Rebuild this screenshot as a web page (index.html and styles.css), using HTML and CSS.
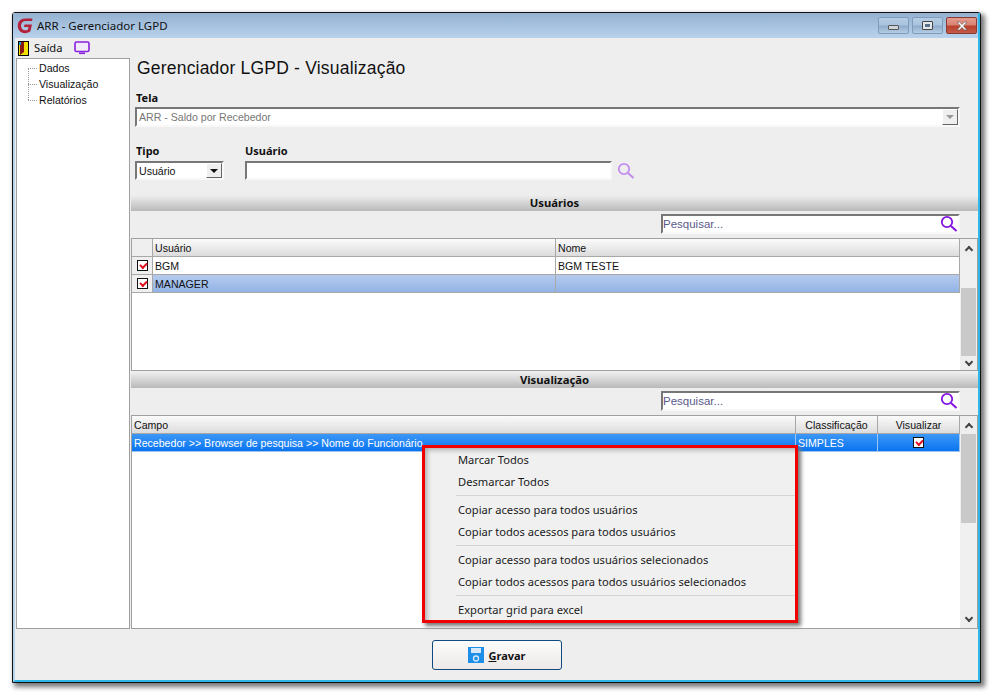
FILE: index.html
```html
<!DOCTYPE html>
<html lang="pt">
<head>
<meta charset="utf-8">
<title>ARR - Gerenciador LGPD</title>
<link rel="stylesheet" href="styles.css">
</head>
<body>
<div class="window">
  <div class="titlebar">
    <svg class="logo" width="17" height="17" viewBox="0 0 17 17"><path d="M15.500 1.500H8C4 1.500.8 4.500.8 8.800c0 4.200 3 7.400 7 7.400 2.500 0 4.500-.8 5.700-2.200L15 7.500H7.500L7 10h4.500l-.5 2.400c-.8.6-1.800.9-3 .9-2.300 0-4-1.900-4-4.500 0-2.800 2-4.800 4.700-4.800H15z" fill="#b3213c"/></svg>
    <span class="wintitle">ARR - Gerenciador LGPD</span>
    <div class="wincontrols">
      <div class="wbtn"><span class="glyph-min"></span></div>
      <div class="wbtn"><span class="glyph-max"></span></div>
      <div class="wbtn close"><svg width="12" height="10" viewBox="0 0 12 10"><path d="M1 1h2.500L6 3.500 8.500 1H11L7.500 5 11 9H8.500L6 6.500 3.500 9H1L4.500 5z" fill="#fff" stroke="#555" stroke-width=".6"/></svg></div>
    </div>
  </div>
  <div class="toolbar">
    <svg class="door" width="11" height="15" viewBox="0 0 11 15"><rect width="11" height="15" fill="#000"/><rect x="1" y="1" width="9" height="13" fill="#f4e000"/><path d="M2 1h4v10l-4 3z" fill="#8a1a10"/><rect x="1" y="1" width="2" height="3" fill="#1c9ad6"/></svg>
    <span class="tool-label">Saída</span>
    <svg class="monitor" width="16" height="14" viewBox="0 0 16 14"><rect x="1" y="1" width="14" height="9.500" rx="1.500" fill="#f2ecfa" stroke="#8a1fe0" stroke-width="1.600"/><rect x="5" y="11.500" width="6" height="1.600" fill="#8a1fe0"/></svg>
  </div>
  <div class="content">
    <ul class="tree">
      <li>Dados</li>
      <li>Visualização</li>
      <li>Relatórios</li>
    </ul>
    <main class="main">
      <h1 class="page-title">Gerenciador LGPD - Visualização</h1>
      <div class="field-tela">
        <label class="flabel">Tela</label>
        <div class="combo disabled">
          <span class="combo-text">ARR - Saldo por Recebedor</span>
          <span class="combo-btn"><i class="arrow"></i></span>
        </div>
      </div>
      <div class="filters">
        <div class="field-tipo">
          <label class="flabel tall">Tipo</label>
          <div class="combo">
            <span class="combo-text">Usuário</span>
            <span class="combo-btn"><i class="arrow"></i></span>
          </div>
        </div>
        <div class="field-user">
          <label class="flabel tall flush">Usuário</label>
          <div class="user-line">
            <div class="input"></div>
            <svg class="lens" width="18" height="18" viewBox="0 0 18 18"><circle cx="7" cy="7" r="5.200" fill="none" stroke="#c38df0" stroke-width="1.800"/><path d="M11 11l5.500 5" stroke="#c38df0" stroke-width="2"/></svg>
          </div>
        </div>
      </div>

      <div class="section-head">Usuários</div>
      <div class="search-row">
        <div class="search">
          <span class="placeholder">Pesquisar...</span>
          <svg width="18" height="18" viewBox="0 0 18 18"><circle cx="7" cy="7" r="5.200" fill="none" stroke="#8412e0" stroke-width="1.800"/><path d="M11 11l5.500 5" stroke="#8412e0" stroke-width="2"/></svg>
        </div>
      </div>
      <div class="table table-users">
        <div class="grid-area">
          <div class="row head cols-users">
            <div class="cell corner"></div><div class="cell">Usuário</div><div class="cell">Nome</div>
          </div>
          <div class="row cols-users">
            <div class="cell corner-body"><span class="check"></span></div><div class="cell">BGM</div><div class="cell">BGM TESTE</div>
          </div>
          <div class="row cols-users soft">
            <div class="cell corner-body"><span class="check"></span></div><div class="cell">MANAGER</div><div class="cell"></div>
          </div>
        </div>
        <div class="scrollbar">
          <span class="sb-btn"><i class="chev up"></i></span>
          <span class="sb-track"><span class="sb-gap-users"></span><span class="sb-thumb"></span></span>
          <span class="sb-btn"><i class="chev down"></i></span>
        </div>
      </div>

      <div class="section-head second">Visualização</div>
      <div class="search-row second">
        <div class="search">
          <span class="placeholder">Pesquisar...</span>
          <svg width="18" height="18" viewBox="0 0 18 18"><circle cx="7" cy="7" r="5.200" fill="none" stroke="#8412e0" stroke-width="1.800"/><path d="M11 11l5.500 5" stroke="#8412e0" stroke-width="2"/></svg>
        </div>
      </div>
      <div class="table table-view">
        <div class="grid-area">
          <div class="row head cols-view">
            <div class="cell">Campo</div><div class="cell center">Classificação</div><div class="cell center">Visualizar</div>
          </div>
          <div class="row cols-view strong">
            <div class="cell">Recebedor &gt;&gt; Browser de pesquisa &gt;&gt; Nome do Funcionário</div><div class="cell">SIMPLES</div><div class="cell center"><span class="check"></span></div>
          </div>
        </div>
        <div class="scrollbar">
          <span class="sb-btn"><i class="chev up"></i></span>
          <span class="sb-track"><span class="sb-thumb view"></span></span>
          <span class="sb-btn"><i class="chev down"></i></span>
        </div>
      </div>
    </main>
  </div>
  <div class="footer">
    <button class="save" type="button">
      <svg width="16" height="16" viewBox="0 0 16 16"><rect width="16" height="16" fill="#1e8fe8"/><rect x="3" y="1" width="10" height="5" fill="#d5e9fa"/><circle cx="8" cy="11.500" r="2.500" fill="none" stroke="#d5e9fa" stroke-width="1.300"/></svg>
      <span><u>G</u>ravar</span>
    </button>
  </div>
  <div class="context-menu">
    <div class="mi">Marcar Todos</div>
    <div class="mi">Desmarcar Todos</div>
    <hr class="sep">
    <div class="mi">Copiar acesso para todos usuários</div>
    <div class="mi">Copiar todos acessos para todos usuários</div>
    <hr class="sep">
    <div class="mi">Copiar acesso para todos usuários selecionados</div>
    <div class="mi">Copiar todos acessos para todos usuários selecionados</div>
    <hr class="sep">
    <div class="mi">Exportar grid para excel</div>
  </div>
</div>
</body>
</html>
```
FILE: styles.css
```css
* { box-sizing: border-box; }
html, body { margin: 0; padding: 0; }
body {
  width: 996px; height: 697px; background: #fff; overflow: hidden;
  font-family: "Liberation Sans", Arial, sans-serif;
  font-size: 10.600px; color: #111;
}
.window {
  position: relative;
  margin: 12px 0 0 12px;
  width: 969px; height: 671px;
  background: #eeeeee;
  border: 1px solid #111;
  border-radius: 3px 3px 0 0;
  box-shadow: 3px 3px 5px 1px #777;
  display: flex; flex-direction: column;
}
.titlebar {
  height: 25px; flex: none; display: flex; align-items: center;
  padding: 0 0 0 4px;
  background: linear-gradient(#93b1d0, #b9d2ec);
  border-right: 2px solid #2fb6e8;
}
.logo { margin-right: 3px; }
.wintitle { font-size: 11.500px; font-family: "Noto Sans", sans-serif; color: #111; }
.wincontrols { margin-left: auto; display: flex; gap: 3px; align-self: flex-start; margin-top: 4px; margin-right: 1px; }
.wbtn {
  width: 31px; height: 17px; display: flex; align-items: center; justify-content: center;
  border: 1px solid #7f9cbc; border-radius: 2px;
  background: linear-gradient(#b4cce4 0, #a9c3de 48%, #8daac9 52%, #b4cce4 100%);
}
.wbtn.close { border-color: #8a3a34; background: linear-gradient(#e39b8e 0, #d98272 48%, #b8402c 52%, #c45a48 100%); }
.glyph-min { width: 11px; height: 5px; margin-top: 4px; background: #cdd4da; border: 1px solid #555; border-radius: 1px; }
.glyph-max { width: 11px; height: 9px; background: #e4e8ec; border: 1px solid #444; border-radius: 1px; display: flex; align-items: center; justify-content: center; }
.glyph-max::after { content: ""; width: 5px; height: 3px; background: #5a6f88; }
.toolbar {
  height: 20px; flex: none; display: flex; align-items: center;
  padding: 0 0 0 3px; border-left: 2px solid #b9d2ec; border-right: 2px solid #2fb6e8;
}
.door { margin-right: 5px; }
.tool-label { font-size: 11.200px; font-family: "Noto Sans", sans-serif; margin: 0 12px 2px 0; }
.content {
  height: 571px; flex: none; display: flex;
  border-left: 2px solid #b9d2ec; border-right: 2px solid #2fb6e8;
  padding-left: 1px; gap: 1px;
}
.tree {
  list-style: none; margin: 0; padding: 1px 0 0 22px;
  width: 114px; flex: none; height: 571px;
  background: #fff; border: 1px solid #a0a0a0;
}
.tree li { height: 16px; line-height: 16px; position: relative; }
.tree li::before {
  content: ""; position: absolute; left: -11px; top: 8px; width: 9px;
  border-top: 1px dotted #999;
}
.tree li:first-child::after {
  content: ""; position: absolute; left: -11px; top: 8px; height: 32px;
  border-left: 1px dotted #999;
}
.main { flex: 1; min-width: 0; display: flex; flex-direction: column; position: relative; }
.page-title {
  margin: 0 0 0 6px; height: 32px;
  font: 400 17.500px/20px "Liberation Sans", sans-serif; color: #111;
  letter-spacing: .2px;
}
.flabel { display: block; font-weight: 700; font-size: 11px; height: 17px; line-height: 15px; padding-left: 1px; color: #111; font-family: "Noto Sans", sans-serif; }
.flabel.tall { height: 18px; }
.flabel.flush { padding-left: 0; }
.field-tela { margin-left: 4px; width: 825px; }
.combo {
  height: 20px; display: flex; align-items: stretch; background: #fff;
  border: 2px solid; border-color: #777 #f8f8f8 #f8f8f8 #777;
}
.combo-text { flex: 1; padding-left: 2px; line-height: 16px; }
.combo-btn {
  width: 16px; background: #efefef; display: flex; align-items: center; justify-content: center;
  border: 1px solid; border-color: #fff #666 #666 #fff;
}
.arrow { width: 0; height: 0; border: 4px solid transparent; border-top: 4px solid #111; border-bottom: 0; }
.combo.disabled .combo-text { color: #777; }
.combo.disabled .arrow { border-top-color: #999; }
.filters { display: flex; margin: 16px 0 0 4px; height: 52px; flex: none; }
.field-tipo { width: 89px; }
.field-tipo .combo { width: 89px; height: 19px; }
.field-tipo .combo-text { color: #111; line-height: 16px; }
.field-user { margin-left: 21px; }
.user-line { display: flex; align-items: center; gap: 5px; }
.input {
  width: 367px; height: 19px; background: #fff;
  border: 2px solid; border-color: #777 #f8f8f8 #f8f8f8 #777;
}
.lens { margin-top: 1px; }
.section-head {
  height: 16px; flex: none; text-align: center; font-weight: 700; font-size: 11.300px; line-height: 15px;
  background: linear-gradient(#efefef, #b9b9b9); color: #111; font-family: "Noto Sans", sans-serif;
}
.section-head.second { margin-top: 1px; }
.search-row { height: 27px; flex: none; display: flex; justify-content: flex-end; padding: 3px 18px 0 0; }
.search {
  width: 299px; height: 20px; background: #fff; display: flex; align-items: center; justify-content: space-between;
  border: 2px solid; border-color: #777 #f8f8f8 #f8f8f8 #777;
}
.placeholder { color: #5a5a8a; font-size: 11.500px; }
.table { flex: none; display: flex; background: #fff; border: 1px solid #a0a0a0; }
.table-users { height: 133px; }
.table-view { height: 214px; }
.grid-area { flex: 1; min-width: 0; }
.row { display: grid; height: 18px; }
.cols-users { grid-template-columns: 21px 403px 1fr; }
.cols-view { grid-template-columns: 664px 82px 1fr; }
.cell {
  padding-left: 2px; line-height: 18px; overflow: hidden; white-space: nowrap;
  border-right: 1px solid #a8a8a8; border-bottom: 1px solid #a8a8a8;
}
.head .cell { background: linear-gradient(#fbfbfb, #dcdcdc); }
.corner, .corner-body { background: #efefef; padding: 0; display: flex; align-items: center; justify-content: center; }
.head .corner { background: #efefef; }
.center { text-align: center; padding-left: 0; }
.soft .cell { background: linear-gradient(#b5cbee, #92b3e6); }
.soft .corner-body { background: #efefef; }
.strong .cell { background: linear-gradient(#3c98f6, #0a74f0); color: #fff; border-color: #9fc5ee; }
.check {
  display: inline-block; width: 11px; height: 11px; vertical-align: -1px; background: #fff; border: 1px solid #111; position: relative;
}
.check::after {
  content: ""; position: absolute; left: 2px; top: 0; width: 5px; height: 3px; transform: rotate(-45deg) translate(-1px, 1px);
  border-left: 2px solid #e01020; border-bottom: 2px solid #e01020;
}
.scrollbar { width: 17px; flex: none; background: #fff; display: flex; flex-direction: column; }
.sb-btn { height: 18px; flex: none; background: #eee; display: flex; align-items: center; justify-content: center; }
.sb-track { flex: 1; display: flex; flex-direction: column; background: #f0f0f0; padding: 0 1px; }
.sb-gap-users { height: 31px; flex: none; }
.sb-thumb { flex: 1; background: #c9c9c9; }
.sb-thumb.view { flex: none; height: 89px; }
.table-users .sb-btn:last-child { height: 14px; }
.chev { width: 6px; height: 6px; border: solid #444; border-width: 2px 0 0 2px; }
.chev.up { transform: rotate(45deg); margin-top: 3px; }
.chev.down { transform: rotate(225deg); margin-bottom: 3px; }
.footer { flex: 1; display: flex; justify-content: center; padding: 11px 0 0 1px; border-left: 2px solid #b9d2ec; border-right: 2px solid #2fb6e8; border-bottom: 2px solid #2fb6e8; }
.save {
  width: 130px; height: 30px; display: flex; align-items: center; justify-content: center; gap: 4px;
  background: linear-gradient(#fdfcfc, #ece9e7); border: 1px solid #0f4a80; border-radius: 3px;
  font: 700 11px "Noto Sans", sans-serif; color: #111; padding: 0;
}
.context-menu {
  position: absolute; left: 409px; top: 432px; width: 376px; height: 178px;
  background: #f0f0f0; border: 3px solid #f00000; box-shadow: 3px 3px 4px #777, inset 4px 4px 5px -2px #aaa;
  padding: 1px 0 0 33px; font: 11.150px "Noto Sans", sans-serif;
}
.mi { height: 22px; line-height: 22px; color: #1a1a1a; white-space: nowrap; }
.sep { margin: 2px 0 3px -2px; border: 0; border-top: 1px solid #d4d4d4; height: 0; }
```
